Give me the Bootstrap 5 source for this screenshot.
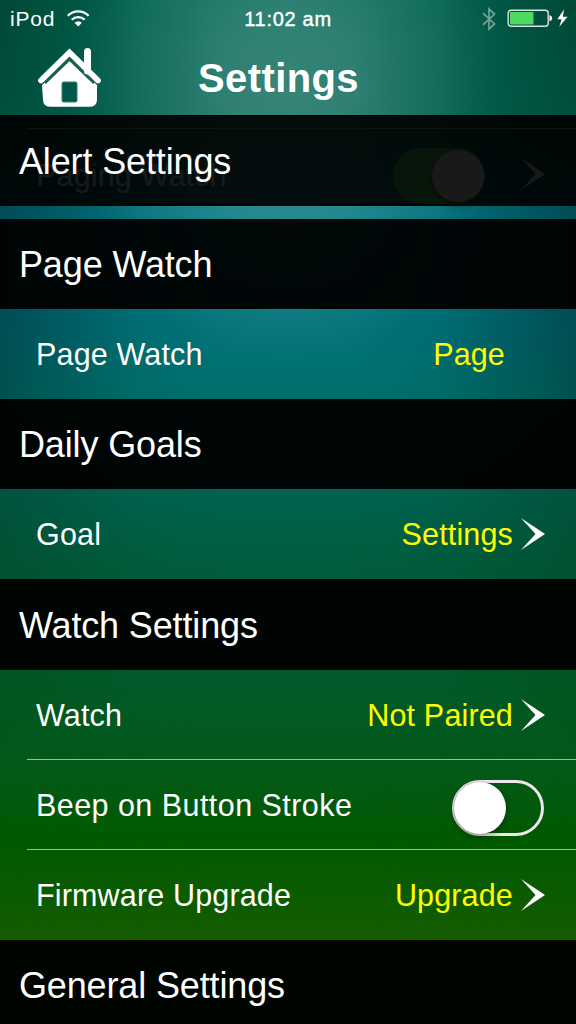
<!DOCTYPE html>
<html lang="en">
<head>
<meta charset="utf-8">
<meta name="viewport" content="width=device-width, initial-scale=1">
<title>Settings</title>
<link href="https://cdn.jsdelivr.net/npm/bootstrap@5.3.0/dist/css/bootstrap.min.css" rel="stylesheet">
<style>
body{font-family:"Liberation Sans",Arial,sans-serif;color:#fff;background:#000;}
.screen{height:1024px;isolation:isolate;background:linear-gradient(#004937 0,#004f3c 115px,#004d57 206px,#004d57 309px,#00524d 399px,#00533f 489px,#00522f 579px,#005523 669px,#04591a 765px,#005a00 840px,#165c00 940px);}
.screen::before{content:"";position:absolute;inset:0;z-index:-1;
background:radial-gradient(ellipse 225px 270px at 288px 95px,rgba(255,255,255,.21),rgba(255,255,255,.18) 30%,rgba(255,255,255,.09) 68%,transparent),linear-gradient(#006654 0,#006353 115px,#00757d 206px,#007278 330px,#00706c 399px,#006351 489px,#005c3a 579px,#005b2d 669px,#04591a 765px,#005a00 840px,#165c00 940px);
-webkit-mask-image:linear-gradient(90deg,transparent,rgba(0,0,0,.85) 24%,#000 38%,#000 62%,rgba(0,0,0,.85) 76%,transparent);mask-image:linear-gradient(90deg,transparent,rgba(0,0,0,.85) 24%,#000 38%,#000 62%,rgba(0,0,0,.85) 76%,transparent);}
.status{height:38px;font-size:20px;line-height:38px;}
.status svg,.title-bar svg,.chev{display:block;flex:none;}
.carrier{margin-left:10px;font-size:21px;letter-spacing:.8px;width:47px;}
.clock{-webkit-text-stroke:.4px #fff;letter-spacing:.7px;}
.title-bar{height:77px;}
.title-bar h1{font-size:40px;line-height:80px;letter-spacing:.4px;padding-left:198px;}
.home{margin-left:37px;top:10px;}
.section{height:90px;padding-left:19px;font-size:36px;line-height:92px;letter-spacing:-.14px;background:rgba(0,0,0,.94);white-space:nowrap;}
.section.tall{height:91px;line-height:93px;}
.pinned{background:rgba(0,0,0,.9);border-top:1px solid #000;border-bottom:2px solid #000;height:91px;line-height:91px;z-index:2;}
.peek{height:13px;}
.setting{height:90px;padding:0 31px 0 36px;font-size:30.5px;letter-spacing:.16px;white-space:nowrap;position:relative;}
.setting>span:not(.toggle){padding-top:2px;}
.setting.tall{height:91px;}
.setting.tall>span:first-child{padding-top:5px;}
.ruled::before{content:"";position:absolute;top:-1px;left:27px;right:0;height:1px;background:#a9b3a9;}
.setting.tall::before{top:0;}
.long-label{letter-spacing:.45px;}
.value{color:#ff0;margin-right:8px;}
.value.alone{margin-right:40px;}
.toggle{width:92px;height:56px;border:3px solid #ece8ed;border-radius:28px;margin-top:5px;margin-right:1px;}
.toggle i{display:block;width:52px;height:52px;margin:-1px 0 0 -1px;border-radius:50%;background:#fff;box-shadow:0 4px 7px rgba(0,0,0,.28),0 0 2px rgba(0,0,0,.4);}
.toggle.on{background:#4cd964;border-color:#4cd964;margin-right:36px;}
.toggle.on i{margin-left:36px;}
</style>
</head>
<body>
<div class="screen position-relative overflow-hidden">
  <div class="status d-flex align-items-center position-relative">
    <span class="carrier">iPod</span>
    <svg style="margin-left:10px" width="24" height="18" viewBox="0 0 24 18"><g fill="none" stroke="#fff" stroke-width="2.300"><path d="M.8 5.800a14.600 14.600 0 0 1 20.800 0"/><path d="M4.700 9.800a9.200 9.200 0 0 1 13 0"/><path d="M11.200 16.500l-3.700-3.700a5.200 5.200 0 0 1 7.400 0z" fill="#fff" stroke="none"/></g></svg>
    <span class="clock position-absolute start-50 translate-middle-x">11:02 am</span>
    <svg class="ms-auto" width="14" height="24" viewBox="0 0 14 24" fill="none" stroke="#74a198" stroke-width="1.700"><path d="M1 6.200L12.500 17 7 22V2l5.500 5L1 17.800"/></svg>
    <svg style="margin:0 8px 0 11px" width="61" height="20" viewBox="0 0 61 20"><rect x="1.200" y="1.300" width="40" height="16" rx="3" fill="none" stroke="#d8e5e1" stroke-width="1.400"/><rect x="3" y="3" width="23.500" height="12.600" rx="1" fill="#4cd964"/><path d="M42.500 6q2.600 1 2.600 3.300t-2.600 3.300z" fill="#fff"/><path d="M57 .5L50.300 10.200h4.300L52.300 17.800l8.200-10h-4.600z" fill="#fff"/></svg>
  </div>
  <header class="title-bar position-relative">
    <svg class="home position-relative" width="65" height="60" viewBox="0 0 65 60"><path d="M5 35.500L32.500 8.500 60 35.500V51q0 8-8 8H14q-8 0-8-8z" fill="#fff" transform="translate(0 4) scale(1 .93)"/><path d="M5.500 32.500L32.500 6.500l27 26" fill="none" stroke="#17624f" stroke-width="9.500"/><path d="M50.500 3.500V23" stroke="#fff" stroke-width="7" stroke-linecap="round"/><path d="M4 32.500L32.500 4.500 61 32.500" fill="none" stroke="#fff" stroke-width="5.800" stroke-linecap="round"/><rect x="25" y="34" width="15" height="20" rx="1.500" fill="#00584a" stroke="#3c7c6d" stroke-width="1"/></svg>
    <h1 class="position-absolute top-0 start-0 m-0 fw-bold">Settings</h1>
  </header>
  <main class="position-relative">
    <div class="section pinned position-absolute top-0 start-0 w-100">Alert Settings</div>
    <div class="peek"></div>
    <div class="setting tall ruled d-flex align-items-center"><span class="me-auto">Paging Watch</span><span class="toggle on"><i></i></span><svg class="chev" width="24" height="32" viewBox="0 0 24 32"><path d="M0 0L24 16 0 32 14.500 16z" fill="#fff"/></svg></div>

    <div class="section">Page Watch</div>
    <div class="setting d-flex align-items-center"><span class="me-auto">Page Watch</span><span class="value alone">Page</span></div>

    <div class="section">Daily Goals</div>
    <div class="setting d-flex align-items-center"><span class="me-auto">Goal</span><span class="value">Settings</span><svg class="chev" width="24" height="32" viewBox="0 0 24 32"><path d="M0 0L24 16 0 32 14.500 16z" fill="#fff"/></svg></div>

    <div class="section tall">Watch Settings</div>
    <div class="setting d-flex align-items-center"><span class="me-auto">Watch</span><span class="value">Not Paired</span><svg class="chev" width="24" height="32" viewBox="0 0 24 32"><path d="M0 0L24 16 0 32 14.500 16z" fill="#fff"/></svg></div>
    <div class="setting ruled d-flex align-items-center"><span class="me-auto long-label">Beep on Button Stroke</span><span class="toggle"><i></i></span></div>
    <div class="setting ruled d-flex align-items-center"><span class="me-auto">Firmware Upgrade</span><span class="value">Upgrade</span><svg class="chev" width="24" height="32" viewBox="0 0 24 32"><path d="M0 0L24 16 0 32 14.500 16z" fill="#fff"/></svg></div>

    <div class="section">General Settings</div>
  </main>
</div>
<script src="https://cdn.jsdelivr.net/npm/bootstrap@5.3.0/dist/js/bootstrap.bundle.min.js"></script>
</body>
</html>
